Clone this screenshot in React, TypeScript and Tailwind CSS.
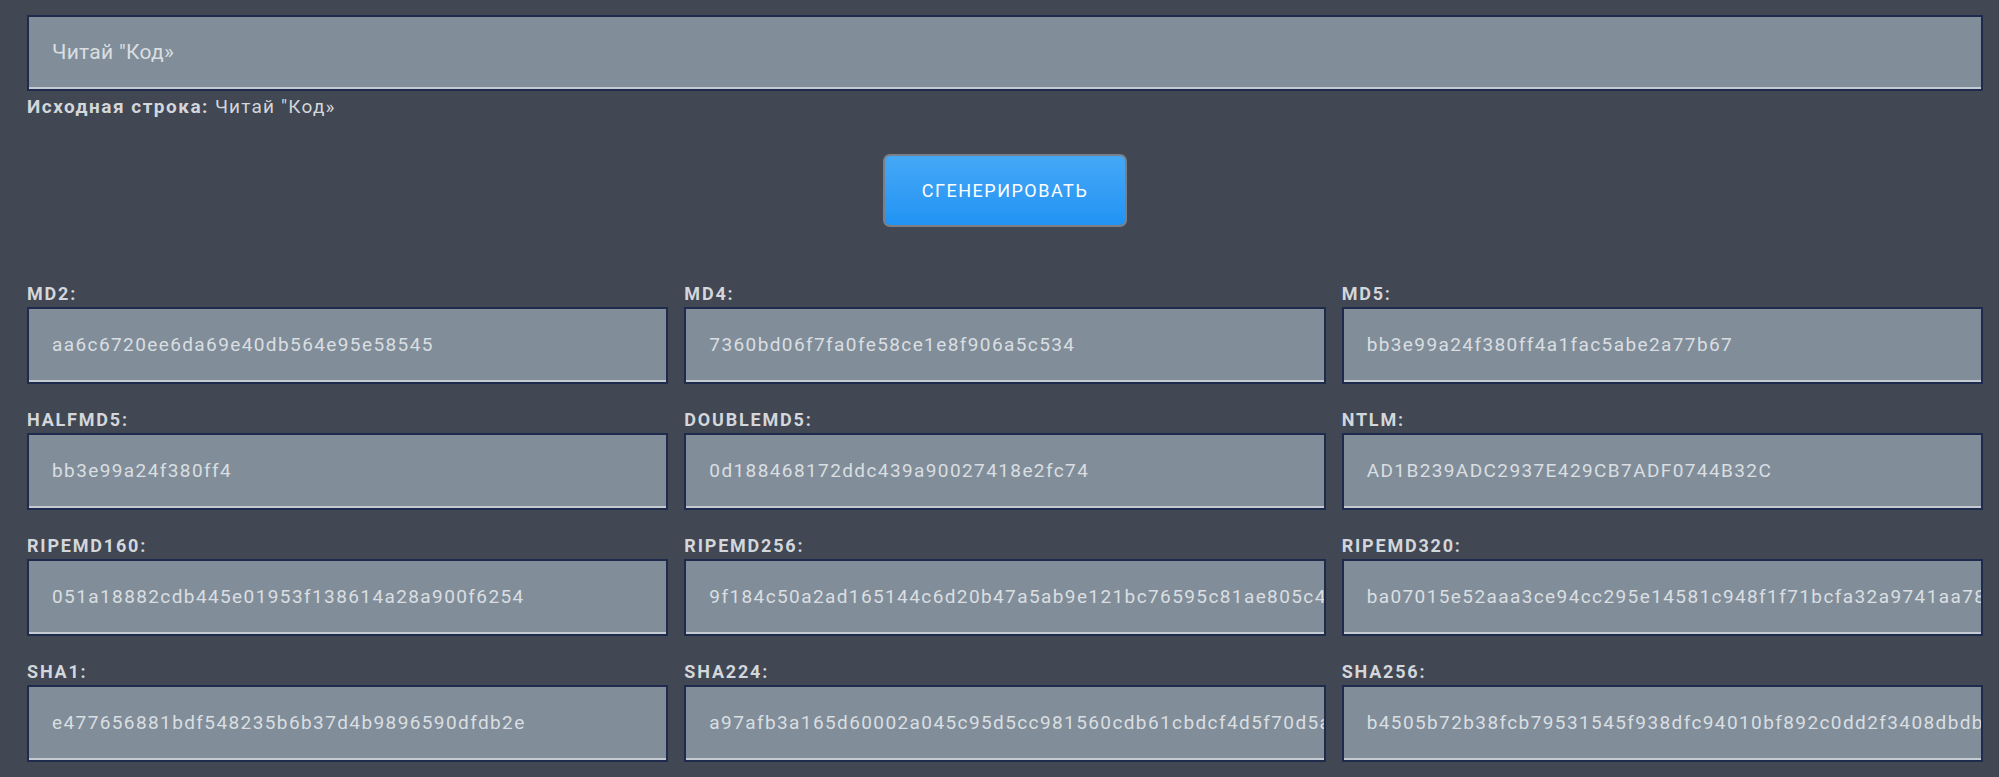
const source = 'Читай "Код»';

type HashRow = {
  name: string;
  value: string;
};

// Values as shown on screen; long ones get clipped by the box anyway
const hashes: HashRow[] = [
  { name: "MD2", value: "aa6c6720ee6da69e40db564e95e58545" },
  { name: "MD4", value: "7360bd06f7fa0fe58ce1e8f906a5c534" },
  { name: "MD5", value: "bb3e99a24f380ff4a1fac5abe2a77b67" },
  { name: "HALFMD5", value: "bb3e99a24f380ff4" },
  { name: "DOUBLEMD5", value: "0d188468172ddc439a90027418e2fc74" },
  { name: "NTLM", value: "AD1B239ADC2937E429CB7ADF0744B32C" },
  { name: "RIPEMD160", value: "051a18882cdb445e01953f138614a28a900f6254" },
  { name: "RIPEMD256", value: "9f184c50a2ad165144c6d20b47a5ab9e121bc76595c81ae805c4f49a1b2c3d4e" },
  { name: "RIPEMD320", value: "ba07015e52aaa3ce94cc295e14581c948f1f71bcfa32a9741aa783f7a2c4e6f80b1d3f5a7c9e" },
  { name: "SHA1", value: "e477656881bdf548235b6b37d4b9896590dfdb2e" },
  { name: "SHA224", value: "a97afb3a165d60002a045c95d5cc981560cdb61cbdcf4d5f70d5a5e1c2" },
  { name: "SHA256", value: "b4505b72b38fcb79531545f938dfc94010bf892c0dd2f3408dbdb6e7a1c3f5d9" },
];

const boxClass =
  "border-2 border-[#1f2b4d] bg-[#818e99] shadow-[inset_0_-2px_0_#c4cbd2] text-[#dadee2] whitespace-nowrap overflow-hidden flex items-center pl-[23px]";

function HashField({ row }: { row: HashRow }) {
  return (
    <div className="flex flex-col min-w-0">
      <div className="h-[22px] leading-[22px] text-[18px] font-bold tracking-[1.8px] text-[#d3d6da] mb-[2px]">
        {row.name}:
      </div>
      <div className={`${boxClass} h-[77px] text-[19px] tracking-[1.4px]`}>{row.value}</div>
    </div>
  );
}

export default function App() {
  return (
    <div
      className="min-h-[777px] w-full bg-[#414753] pl-[27px] pr-[16px] pt-[15px] pb-[16px]"
      style={{ fontFamily: "Roboto, 'Noto Sans', sans-serif" }}
    >
      {/* source string input */}
      <div className={`${boxClass} h-[76px] text-[21px] tracking-[0.3px]`}>{source}</div>
      <div className="mt-[4px] h-[24px] leading-[24px] text-[19px] text-[#d3d6da] tracking-[1.2px]">
        <span className="font-bold tracking-[1.5px]">Исходная строка:</span> {source}
      </div>

      <div className="flex justify-center mt-[35px]">
        <button className="w-[244px] h-[73px] rounded-[7px] border-2 border-[#7b8088] bg-gradient-to-b from-[#45a8f6] to-[#2093f3] text-white text-[18px] tracking-[1.5px] uppercase">
          Сгенерировать
        </button>
      </div>

      <div className="grid grid-cols-3 gap-x-[16px] gap-y-[25px] mt-[56px]">
        {hashes.map((row) => (
          <HashField key={row.name} row={row} />
        ))}
      </div>
    </div>
  );
}
